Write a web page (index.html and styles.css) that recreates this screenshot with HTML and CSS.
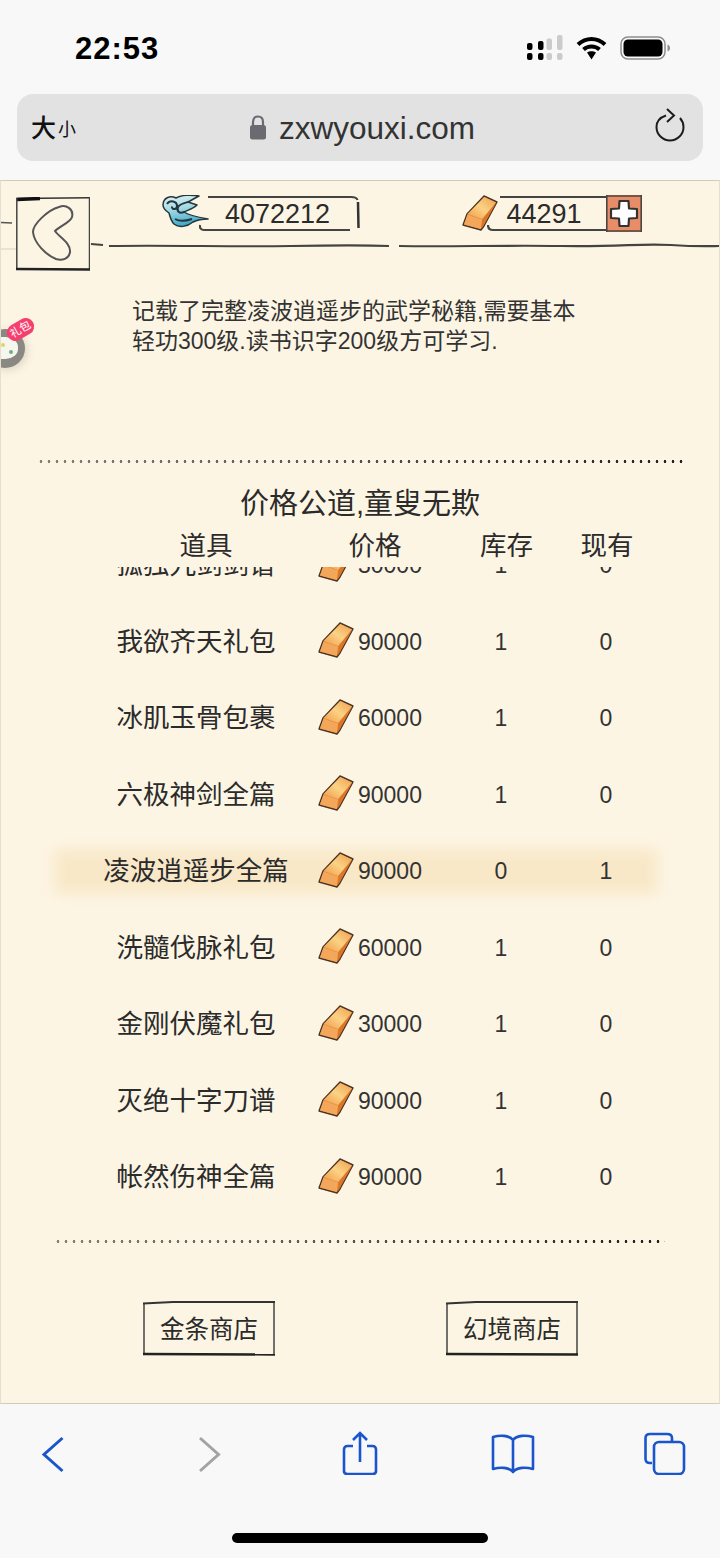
FILE: index.html
```html
<!DOCTYPE html>
<html lang="zh">
<head>
    <meta charset="UTF-8">
    <meta name="viewport" content="width=device-width, initial-scale=1.0">
    <title>zxwyouxi.com</title>
    <link rel="stylesheet" href="styles.css">
</head>
<body>
    <svg class="defs" width="0" height="0">
        <defs>
            <linearGradient id="goldTop" x1="0" y1="1" x2="1" y2="0">
                <stop offset="0" stop-color="#f09a48"/>
                <stop offset="0.5" stop-color="#fbd284"/>
                <stop offset="1" stop-color="#f0a050"/>
            </linearGradient>
            <linearGradient id="cloudFill" x1="0.2" y1="0" x2="0.5" y2="1">
                <stop offset="0" stop-color="#dff2f4"/>
                <stop offset="0.45" stop-color="#9fd8e4"/>
                <stop offset="1" stop-color="#36a4c4"/>
            </linearGradient>
            <symbol id="ingot" viewBox="0 0 36 36">
                <path d="M22 1 L35 7 L22 31 L19 35 L1 30 L5 19 Z" fill="#e6832f" stroke="#4d3424" stroke-width="1.400" stroke-linejoin="round"/>
                <path d="M5.500 19 L22.300 2 L34 7.500 L20 24 Z" fill="url(#goldTop)"/>
                <path d="M5.500 19.500 L20 24.500 L18.800 34 L2 29.500 Z" fill="#f3a75a"/>
                <path d="M20.500 24.500 L34 8 L21.500 30.500 L19.500 33.500 Z" fill="#da7628"/>
            </symbol>
        </defs>
    </svg>

    <header class="browser-top">
        <div class="status-bar">
            <span class="time">22:53</span>
            <div class="status-icons">
                <svg class="signal" width="36" height="26" viewBox="0 0 36 26">
                    <rect x="0" y="8" width="5.500" height="7" rx="2"/>
                    <rect x="0" y="18" width="5.500" height="7" rx="2"/>
                    <rect x="11" y="6" width="5.500" height="9" rx="2"/>
                    <rect x="11" y="18" width="5.500" height="7" rx="2"/>
                    <rect class="off" x="19.500" y="3.500" width="5.500" height="11.500" rx="2"/>
                    <rect class="off" x="19.500" y="18" width="5.500" height="7" rx="2"/>
                    <rect class="off" x="30" y="0" width="5.500" height="15" rx="2"/>
                    <rect class="off" x="30" y="18" width="5.500" height="7" rx="2"/>
                </svg>
                <svg class="wifi" width="31" height="24" viewBox="0 0 31 24">
                    <path d="M2 8.500 C10 1 21 1 29 8.500" fill="none" stroke="#000" stroke-width="4"/>
                    <path d="M7.500 13.500 C12 9.500 19 9.500 23.500 13.500" fill="none" stroke="#000" stroke-width="4"/>
                    <path d="M11 16.500 C13.500 14.800 17.500 14.800 20 16.500 L15.500 23.500 Z"/>
                </svg>
                <svg class="battery" width="51" height="24" viewBox="0 0 51 24">
                    <rect x="1" y="1" width="44" height="22" rx="7" fill="none" stroke="#8d8d8d" stroke-width="1.500"/>
                    <rect x="3.500" y="3.500" width="39" height="17" rx="4.500"/>
                    <path d="M47.500 8.500 C49.500 9.500 50 10.500 50 12 C50 13.500 49.500 14.500 47.500 15.500 Z" fill="#8d8d8d"/>
                </svg>
            </div>
        </div>
        <div class="url-bar">
            <span class="aa"><span class="aa-big">大</span><span class="aa-small">小</span></span>
            <div class="address">
                <svg class="lock" width="18" height="25" viewBox="0 0 18 25">
                    <path d="M4 11 V7 C4 3.500 6 1.500 9 1.500 C12 1.500 14 3.500 14 7 V11" fill="none" stroke="#6a6a70" stroke-width="2.200"/>
                    <rect x="1" y="10" width="16" height="14.500" rx="2.500" fill="#6a6a70"/>
                </svg>
                <span class="host">zxwyouxi.com</span>
            </div>
            <svg class="reload" width="30" height="34" viewBox="0 0 30 34">
                <path d="M11 7.500 C5 9.500 1.500 14 1.500 19 C1.500 26.500 7.500 32.500 15 32.500 C22.500 32.500 28.500 26.500 28.500 19 C28.500 15.500 27.200 12.500 25 10" fill="none" stroke="#1c1c1c" stroke-width="2"/>
                <path d="M12 1 L19 7.500 L12 14" fill="none" stroke="#1c1c1c" stroke-width="2"/>
            </svg>
        </div>
    </header>

    <main class="game">
        <svg class="top-rule" width="720" height="40" viewBox="0 0 720 40">
            <path d="M0 1.500 L11 2 M17 2 L20 2" stroke="#555" stroke-width="1.500" fill="none"/>
            <path d="M0 28 L16 28" stroke="#e2dccb" stroke-width="1.500" fill="none"/>
            <path d="M90 23 L102 24 M108 25 C170 24 230 26 290 25 S360 24 388 25 M398 25 C450 26 500 24 560 25 S640 22 670 24 S710 25 720 25" stroke="#44443f" stroke-width="2.200" fill="none"/>
        </svg>

        <div class="top-bar">
            <button class="back-btn">
                <svg width="74" height="74" viewBox="0 0 74 74">
                    <path d="M0 1.500 L74 0.800" stroke="#333" stroke-width="1.500" fill="none"/>
                    <path d="M1 2.500 L24 1.500" stroke="#111" stroke-width="3.500" fill="none"/>
                    <path d="M0.800 1 V72 M73.500 0 V72" stroke="#444" stroke-width="1.500" fill="none"/>
                    <path d="M0 72 L74 72.500" stroke="#222" stroke-width="2.500" fill="none"/>
                    <path d="M43 10 C50 7 58 12 56 20 C55 25 44 29 39 34 C43 40 55 46 54 55 C53 62 46 64 40 62 C30 58 18 46 17 35 C17 27 32 13 43 10 Z" stroke="#555" stroke-width="2" fill="none"/>
                </svg>
            </button>

            <div class="coin coin-silver">
                <svg class="cloud" width="48" height="34" viewBox="0 0 48 34">
                    <path d="M1 10 C1 3 8 0 14 3 C19 0 29 -0.500 37 1 C33 3 30 5 26 7 C29 8 32 9 35 10 C31 14 26 15 22 17 C26 20 35 22 46 24 C39 24 35 25 31 27 C25 32 17 33 12 29 C9 26 8 22 7 18 C4 16 1 14 1 10 Z" fill="url(#cloudFill)" stroke="#25353c" stroke-width="1.500" stroke-linejoin="round"/>
                    <path d="M5 9 C8 4.500 15 6 15 11 C15 15 9.500 15 10 11.500 M22 17 C17 19 14.500 16 16 12 C17.500 9 22 8 26 7 M13 24 C18 27 24 26 30 24" fill="none" stroke="#25353c" stroke-width="2"/>
                </svg>
                <div class="counter counter-silver">
                    <svg class="frame" width="161" height="37" viewBox="0 0 161 37" preserveAspectRatio="none">
                        <path d="M9 2 L152 2 C156 2 158 3 158.500 5" fill="none" stroke="#444" stroke-width="2.200"/>
                        <path d="M159 7 L159.500 33" fill="none" stroke="#333" stroke-width="2.500"/>
                        <path d="M151 35 L5 35 C2 35 0.500 33 1 30" fill="none" stroke="#444" stroke-width="2.200"/>
                    </svg>
                    <span>4072212</span>
                </div>
            </div>

            <div class="coin coin-gold">
                <svg class="ingot-top" width="36" height="36"><use href="#ingot"/></svg>
                <div class="counter counter-gold">
                    <svg class="frame" width="119" height="37" viewBox="0 0 119 37" preserveAspectRatio="none">
                        <path d="M13 2 L119 2 M119 35 L6 35 C2 35 1 33 1 30" fill="none" stroke="#444" stroke-width="2.200"/>
                    </svg>
                    <span>44291</span>
                </div>
                <button class="plus-btn">
                    <svg width="36" height="37" viewBox="0 0 36 37">
                        <rect x="0" y="0" width="36" height="37" fill="#e98d68"/>
                        <path d="M0.800 0 V37 M0 1 H36 M35.200 0 V37 M0 36 H36" stroke="#4c4640" stroke-width="1.600" fill="none"/>
                        <path d="M13.500 6 L22.500 6 L23 13.500 L31 14 L31 23 L23 23.500 L22.500 31 L13.500 31 L13 23.500 L5 23 L5 14 L13 13.500 Z" fill="#fff" stroke="#333" stroke-width="2.200" stroke-linejoin="round"/>
                    </svg>
                </button>
            </div>
        </div>

        <div class="float-ball">
            <div class="ball">
                <span class="ball-blob"></span>
                <span class="ball-dot ball-dot-a"></span>
                <span class="ball-dot ball-dot-b"></span>
            </div>
            <span class="ball-badge">礼包</span>
        </div>

        <p class="desc">记载了完整凌波逍遥步的武学秘籍,需要基本<br>轻功300级.读书识字200级方可学习.</p>

        <div class="dots dots-top"></div>

        <h2 class="shop-title">价格公道,童叟无欺</h2>

        <div class="table-head">
            <span>道具</span>
            <span>价格</span>
            <span>库存</span>
            <span>现有</span>
        </div>

        <div class="item-list">
            <div class="item-scroll">
                <div class="item"><span class="item-name">孤独九剑剑谱</span><span class="item-price"><svg width="36" height="36"><use href="#ingot"/></svg>30000</span><span class="item-num">1</span><span class="item-num">0</span></div>
                <div class="item"><span class="item-name">我欲齐天礼包</span><span class="item-price"><svg width="36" height="36"><use href="#ingot"/></svg>90000</span><span class="item-num">1</span><span class="item-num">0</span></div>
                <div class="item"><span class="item-name">冰肌玉骨包裹</span><span class="item-price"><svg width="36" height="36"><use href="#ingot"/></svg>60000</span><span class="item-num">1</span><span class="item-num">0</span></div>
                <div class="item"><span class="item-name">六极神剑全篇</span><span class="item-price"><svg width="36" height="36"><use href="#ingot"/></svg>90000</span><span class="item-num">1</span><span class="item-num">0</span></div>
                <div class="item item-active"><span class="item-name">凌波逍遥步全篇</span><span class="item-price"><svg width="36" height="36"><use href="#ingot"/></svg>90000</span><span class="item-num">0</span><span class="item-num">1</span></div>
                <div class="item"><span class="item-name">洗髓伐脉礼包</span><span class="item-price"><svg width="36" height="36"><use href="#ingot"/></svg>60000</span><span class="item-num">1</span><span class="item-num">0</span></div>
                <div class="item"><span class="item-name">金刚伏魔礼包</span><span class="item-price"><svg width="36" height="36"><use href="#ingot"/></svg>30000</span><span class="item-num">1</span><span class="item-num">0</span></div>
                <div class="item"><span class="item-name">灭绝十字刀谱</span><span class="item-price"><svg width="36" height="36"><use href="#ingot"/></svg>90000</span><span class="item-num">1</span><span class="item-num">0</span></div>
                <div class="item"><span class="item-name">帐然伤神全篇</span><span class="item-price"><svg width="36" height="36"><use href="#ingot"/></svg>90000</span><span class="item-num">1</span><span class="item-num">0</span></div>
            </div>
        </div>

        <div class="dots dots-bottom"></div>

        <div class="shop-links">
            <a class="shop-btn">
                <svg class="frame" width="132" height="55" viewBox="0 0 132 55" preserveAspectRatio="none">
                    <path d="M1 2 L1 53 M131 1 L131 53" stroke="#444" stroke-width="1.500" fill="none"/>
                    <path d="M0 2.500 L30 1 L132 1" stroke="#333" stroke-width="1.800" fill="none"/>
                    <path d="M0 53 L132 53.500" stroke="#222" stroke-width="2.400" fill="none"/>
                </svg>
                金条商店
            </a>
            <a class="shop-btn">
                <svg class="frame" width="132" height="55" viewBox="0 0 132 55" preserveAspectRatio="none">
                    <path d="M1 2 L1 53 M131 1 L131 53" stroke="#444" stroke-width="1.500" fill="none"/>
                    <path d="M0 2.500 L30 1 L132 1" stroke="#333" stroke-width="1.800" fill="none"/>
                    <path d="M0 53 L132 53.500" stroke="#222" stroke-width="2.400" fill="none"/>
                </svg>
                幻境商店
            </a>
        </div>
    </main>

    <footer class="browser-bottom">
        <nav class="toolbar">
            <svg width="40" height="44" viewBox="0 0 40 44">
                <path d="M29.500 7 L11 23.500 L29.500 40" fill="none" stroke="#1a55cc" stroke-width="3"/>
            </svg>
            <svg width="40" height="44" viewBox="0 0 40 44">
                <path d="M11 7 L29.500 23.500 L11 40" fill="none" stroke="#a3a3a5" stroke-width="3"/>
            </svg>
            <svg width="40" height="44" viewBox="0 0 40 44">
                <path d="M13 15 H7.500 C5 15 4 16.500 4 18.500 V40 C4 42 5 43 7.500 43 H32.500 C35 43 36 42 36 40 V18.500 C36 16.500 35 15 32.500 15 H27" fill="none" stroke="#1a55cc" stroke-width="2.600"/>
                <path d="M20 31 V2 M13 9 L20 2 L27 9" fill="none" stroke="#1a55cc" stroke-width="2.600"/>
            </svg>
            <svg width="44" height="44" viewBox="0 0 44 44">
                <path d="M22 9 C18 4 9 4 2 6 V38 C9 36 18 36 22 41 C26 36 35 36 42 38 V6 C35 4 26 4 22 9 Z M22 9 V41" fill="none" stroke="#1a55cc" stroke-width="2.600" stroke-linejoin="round"/>
            </svg>
            <svg width="42" height="44" viewBox="0 0 42 44">
                <path d="M8 32 H6 C3 32 1.500 30.500 1.500 28 V7 C1.500 4.500 3 3 6 3 H23 C26 3 28 4.500 28 7 V11" fill="none" stroke="#1a55cc" stroke-width="2.600"/>
                <rect x="10" y="11" width="30" height="32" rx="5" fill="none" stroke="#1a55cc" stroke-width="2.600"/>
            </svg>
        </nav>
        <div class="home-bar"></div>
    </footer>
</body>
</html>
```

FILE: styles.css
```css
* {
    box-sizing: border-box;
}

html, body {
    margin: 0;
    padding: 0;
}

body {
    width: 720px;
    height: 1558px;
    display: flex;
    flex-direction: column;
    overflow: hidden;
    font-family: "Liberation Sans", "Noto Sans CJK SC", sans-serif;
    background-color: #f8f8f8;
    color: #2b2b2b;
}

svg {
    display: block;
}

.defs {
    position: absolute;
}

/* browser top */
.browser-top {
    height: 180px;
    flex: none;
    background-color: #f8f8f8;
}

.status-bar {
    height: 94px;
    padding: 2px 49px 0 75px;
    display: flex;
    align-items: center;
    justify-content: space-between;
}

.time {
    margin-top: 1px;
    font-size: 31px;
    font-weight: bold;
    color: #000;
    letter-spacing: 1px;
}

.status-icons {
    display: flex;
    align-items: center;
    gap: 14px;
}

.signal rect {
    fill: #000;
}

.signal .off {
    fill: #cbcbcb;
}

.wifi {
    margin: 0 -1px;
}

.url-bar {
    height: 67px;
    margin: 0 17px;
    padding: 0 18px 0 14px;
    background-color: #e2e2e2;
    border-radius: 16px;
    display: flex;
    align-items: center;
    justify-content: space-between;
}

.aa {
    display: flex;
    align-items: flex-end;
    width: 46px;
    color: #111;
}

.aa-big {
    font-size: 25px;
    font-weight: 500;
    line-height: 30px;
}

.aa-small {
    font-size: 18px;
    line-height: 26px;
    margin-left: 2px;
}

.address {
    display: flex;
    align-items: center;
    gap: 12px;
    margin-left: 172px;
}

.host {
    margin-top: 2px;
    font-size: 31.500px;
    color: #333;
}

.reload {
    margin-left: auto;
    margin-top: -6px;
}

/* game */
.game {
    position: relative;
    flex: 1;
    background-color: #fdf5e4;
    border-top: 1px solid #cfcbbd;
    border-bottom: 1px solid #cfcbbd;
    border-left: 1px solid #e4dfd0;
    border-right: 1px solid #e4dfd0;
    margin: 0;
    overflow: hidden;
}

.top-rule {
    position: absolute;
    left: 0;
    top: 40px;
}

.top-bar {
    position: relative;
    height: 89px;
    padding: 16px 0 0 15px;
    display: flex;
    align-items: flex-start;
}

.back-btn, .plus-btn {
    padding: 0;
    border: none;
    background: none;
}

.back-btn {
    width: 74px;
    height: 74px;
    background-color: #fdf5e4;
}

.coin {
    margin-top: -2px;
    display: flex;
    align-items: flex-start;
}

.coin-silver {
    margin-left: 72px;
}

.cloud {
    margin-right: -11px;
    position: relative;
    z-index: 1;
}

.coin-gold {
    margin-left: 102px;
}

.ingot-top {
    margin-right: -11px;
    position: relative;
    z-index: 1;
}

.counter {
    position: relative;
    height: 37px;
    font-size: 27px;
    line-height: 39px;
    text-align: center;
    color: #2b2b2b;
}

.counter-silver {
    width: 161px;
    padding-right: 4px;
}

.counter-gold {
    width: 119px;
    padding-right: 5px;
}

.frame {
    position: absolute;
    left: 0;
    top: 0;
}

.plus-btn {
    width: 36px;
    height: 37px;
}

/* floating gift ball */
.float-ball {
    position: absolute;
    left: -16px;
    top: 148px;
    width: 44px;
    height: 44px;
}

.ball {
    width: 40px;
    height: 39px;
    border-radius: 50%;
    background-color: #8a8883;
    position: relative;
    overflow: hidden;
    box-shadow: 2px 2px 8px rgba(90, 80, 60, 0.2);
}

.ball-blob {
    position: absolute;
    left: 5px;
    top: 8px;
    width: 28px;
    height: 22px;
    border-radius: 45%;
    background-color: #f5f6ee;
}

.ball-dot {
    position: absolute;
    width: 4px;
    height: 4px;
    border-radius: 50%;
}

.ball-dot-a {
    left: 16px;
    top: 14px;
    background-color: #e6d35a;
}

.ball-dot-b {
    left: 24px;
    top: 21px;
    background-color: #6fae8a;
}

.ball-badge {
    position: absolute;
    left: 21px;
    top: -8px;
    width: 29px;
    height: 17px;
    border-radius: 9px;
    background-color: #f5406f;
    color: #fff;
    font-size: 11px;
    line-height: 17px;
    text-align: center;
    transform: rotate(-30deg);
}

.desc {
    margin: 26px 0 0 131px;
    font-size: 23px;
    line-height: 30px;
    color: #333;
}

.dots {
    height: 3px;
    background-image: radial-gradient(circle at center, #222 1.200px, transparent 1.600px);
    background-size: 8px 3px;
    background-repeat: repeat-x;
    -webkit-mask-image: linear-gradient(to right, rgba(0, 0, 0, 0.55), #000);
    mask-image: linear-gradient(to right, rgba(0, 0, 0, 0.55), #000);
}

.dots-top {
    margin: 104px 32px 0 36px;
}

.dots-bottom {
    margin: 24px 54px 0 53px;
}

.shop-title {
    margin: 21px 0 0 0;
    height: 40px;
    font-size: 29px;
    font-weight: normal;
    line-height: 40px;
    text-align: center;
}

.table-head {
    height: 40px;
    margin-top: 2px;
    padding-left: 114px;
    display: grid;
    grid-template-columns: 182px 156px 107px 94px;
    font-size: 26.500px;
    line-height: 40px;
    text-align: center;
}

.item-list {
    height: 649px;
    margin-top: 1px;
    overflow: hidden;
}

.item-scroll {
    margin-top: -39.750px;
}

.item {
    position: relative;
    height: 76.500px;
    padding-left: 73px;
    display: grid;
    grid-template-columns: 244px 130px 106px 104px;
    align-items: center;
    text-align: center;
}

.item-active::before {
    content: "";
    position: absolute;
    left: 53px;
    right: 61px;
    top: 16px;
    bottom: 16px;
    background-color: #f8e8c8;
    filter: blur(7px);
}

.item > span {
    position: relative;
}

.item-name {
    padding-bottom: 6px;
    font-size: 26.500px;
}

.item-price {
    display: flex;
    align-items: center;
    gap: 4px;
    font-size: 23px;
    color: #333;
}

.item-price svg {
    margin-top: -4px;
}

.item-num {
    font-size: 23px;
    color: #333;
}

.shop-links {
    margin-top: 58px;
    padding-left: 142px;
    display: flex;
    gap: 171px;
}

.shop-btn {
    position: relative;
    width: 132px;
    height: 55px;
    font-size: 24.500px;
    line-height: 57px;
    text-align: center;
    color: #2b2b2b;
}

/* browser bottom */
.browser-bottom {
    position: relative;
    height: 154px;
    flex: none;
    background-color: #f8f8f8;
}

.toolbar {
    padding: 27px 0 0 33px;
    display: grid;
    grid-template-columns: 156px 151px 151px 153px 42px;
}

.home-bar {
    width: 256px;
    height: 10px;
    margin: 58px auto 0 auto;
    background-color: #000;
    border-radius: 5px;
}
```
